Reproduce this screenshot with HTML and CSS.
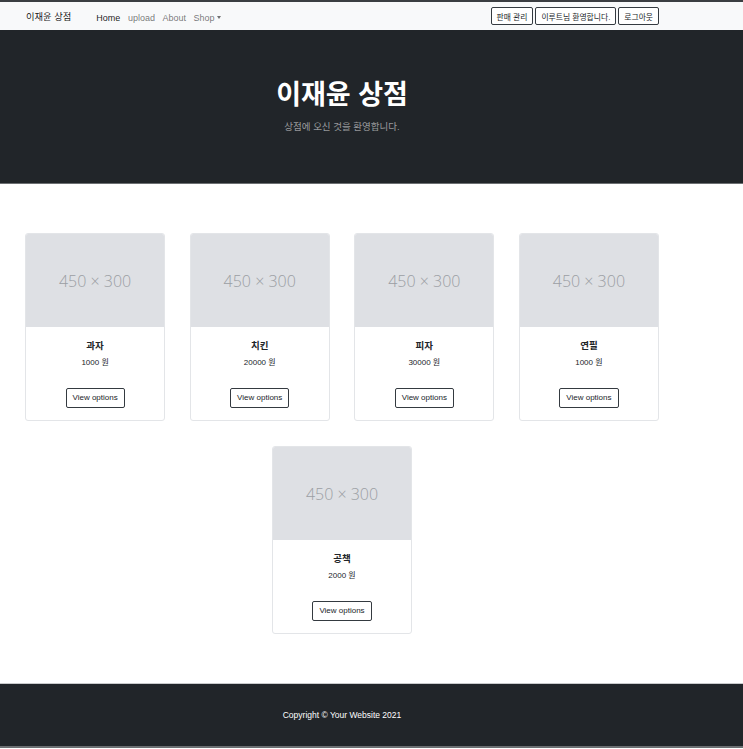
FILE: index.html
```html
<!DOCTYPE html>
<html lang="ko">
<head>
<meta charset="utf-8">
<title>이재윤 상점</title>
<link rel="stylesheet" href="styles.css">
</head>
<body>
<div class="topline"></div>
<nav class="navbar">
  <div class="wrap">
    <div class="nav-inner">
      <a class="brand" href="#">이재윤 상점</a>
      <ul class="nav-links">
        <li><a class="active" href="#">Home</a></li>
        <li><a href="#">upload</a></li>
        <li><a href="#">About</a></li>
        <li><a href="#">Shop<span class="caret"></span></a></li>
      </ul>
      <div class="nav-btns">
        <button class="nbtn">판매 관리</button>
        <button class="nbtn">이루트님 환영합니다.</button>
        <button class="nbtn">로그아웃</button>
      </div>
    </div>
  </div>
</nav>
<header class="hero">
  <div class="wrap hero-inner">
    <h1>이재윤 상점</h1>
    <p>상점에 오신 것을 환영합니다.</p>
  </div>
</header>
<section class="products">
  <div class="wrap">
    <div class="grid">
      <div class="card">
        <div class="ph">450 × 300</div>
        <div class="cbody"><h5>과자</h5><div class="price">1000 원</div></div>
        <div class="cfoot"><a class="vbtn" href="#">View options</a></div>
      </div>
      <div class="card">
        <div class="ph">450 × 300</div>
        <div class="cbody"><h5>치킨</h5><div class="price">20000 원</div></div>
        <div class="cfoot"><a class="vbtn" href="#">View options</a></div>
      </div>
      <div class="card">
        <div class="ph">450 × 300</div>
        <div class="cbody"><h5>피자</h5><div class="price">30000 원</div></div>
        <div class="cfoot"><a class="vbtn" href="#">View options</a></div>
      </div>
      <div class="card">
        <div class="ph">450 × 300</div>
        <div class="cbody"><h5>연필</h5><div class="price">1000 원</div></div>
        <div class="cfoot"><a class="vbtn" href="#">View options</a></div>
      </div>
      <div class="card">
        <div class="ph">450 × 300</div>
        <div class="cbody"><h5>공책</h5><div class="price">2000 원</div></div>
        <div class="cfoot"><a class="vbtn" href="#">View options</a></div>
      </div>
    </div>
  </div>
</section>
<footer class="footer">
  <div class="wrap"><p>Copyright © Your Website 2021</p></div>
</footer>
</body>
</html>
```
FILE: styles.css
```css
* { box-sizing: border-box; }
html, body { margin: 0; padding: 0; }
body {
  font-family: "Liberation Sans", "Noto Sans CJK KR", sans-serif;
  color: #212529;
  background: #fff;
}
.wrap { width: 684px; }
.topline { height: 2px; background: #3b3e42; }
.navbar { background: #f8f9fa; height: 28px; }
.nav-inner {
  width: 634px; margin: 0 auto; height: 28px;
  display: flex; align-items: center;
}
.brand {
  font-size: 9.3px; color: rgba(0,0,0,.9); text-decoration: none;
  margin-left: 1px; margin-right: 25px;
}
.nav-links { list-style: none; margin: 0; padding: 0; display: flex; gap: 7.5px; }
.nav-links a { font-size: 9px; color: rgba(0,0,0,.55); text-decoration: none; }
.nav-links a.active { color: rgba(0,0,0,.9); }
.caret {
  display: inline-block; margin-left: 3px; vertical-align: 2px;
  border-top: 3px solid rgba(0,0,0,.55); border-left: 2.5px solid transparent; border-right: 2.5px solid transparent;
}
.nav-btns { margin-left: auto; display: flex; gap: 2px; }
.nbtn {
  font-family: inherit; font-size: 7.8px; color: #212529;
  background: #fff; border: 1px solid #343a40; border-radius: 2px;
  height: 18px; padding: 0 5px; margin: 0;
}
.hero { background: #212529; height: 154px; border-bottom: 1px solid #6c6f72; }
.hero-inner { padding-top: 47px; text-align: center; }
.hero h1 { margin: 0; color: #fff; font-size: 27px; font-weight: 700; line-height: 36px; }
.hero p { margin: 8px 0 0; color: rgba(255,255,255,.55); font-size: 9.5px; line-height: 12px; }
.products { padding: 49px 0 49px; }
.grid {
  width: 634px; margin: 0 auto;
  display: flex; flex-wrap: wrap; justify-content: center; column-gap: 24.6px; row-gap: 25px;
}
.card {
  width: 140px; height: 188px; border: 1px solid #e3e5e8; border-radius: 3px;
  overflow: hidden; display: flex; flex-direction: column; background: #fff;
}
.ph {
  height: 93px; background: #dee0e4; color: #9b9ea3;
  font-family: "Open Sans", sans-serif; font-weight: 300; font-size: 16px;
  display: flex; align-items: center; justify-content: center;
}
.cbody { text-align: center; padding-top: 12px; }
.cbody h5 { margin: 0; font-size: 9.5px; font-weight: 700; line-height: 14px; color: #212529; }
.price { font-size: 8px; line-height: 12px; margin-top: 4px; }
.cfoot { margin-top: auto; padding-bottom: 12px; text-align: center; }
.vbtn {
  display: inline-block; font-size: 8px; color: #212529; text-decoration: none;
  border: 1px solid #343a40; border-radius: 2px; height: 20px; line-height: 18px; padding: 0 6px;
}
.footer { background: #212529; height: 65px; border-top: 1px solid #c9cacc; border-bottom: 2px solid #6c6f72; }
.footer p { margin: 0; text-align: center; color: #fff; font-size: 8.5px; line-height: 62px; }
```
